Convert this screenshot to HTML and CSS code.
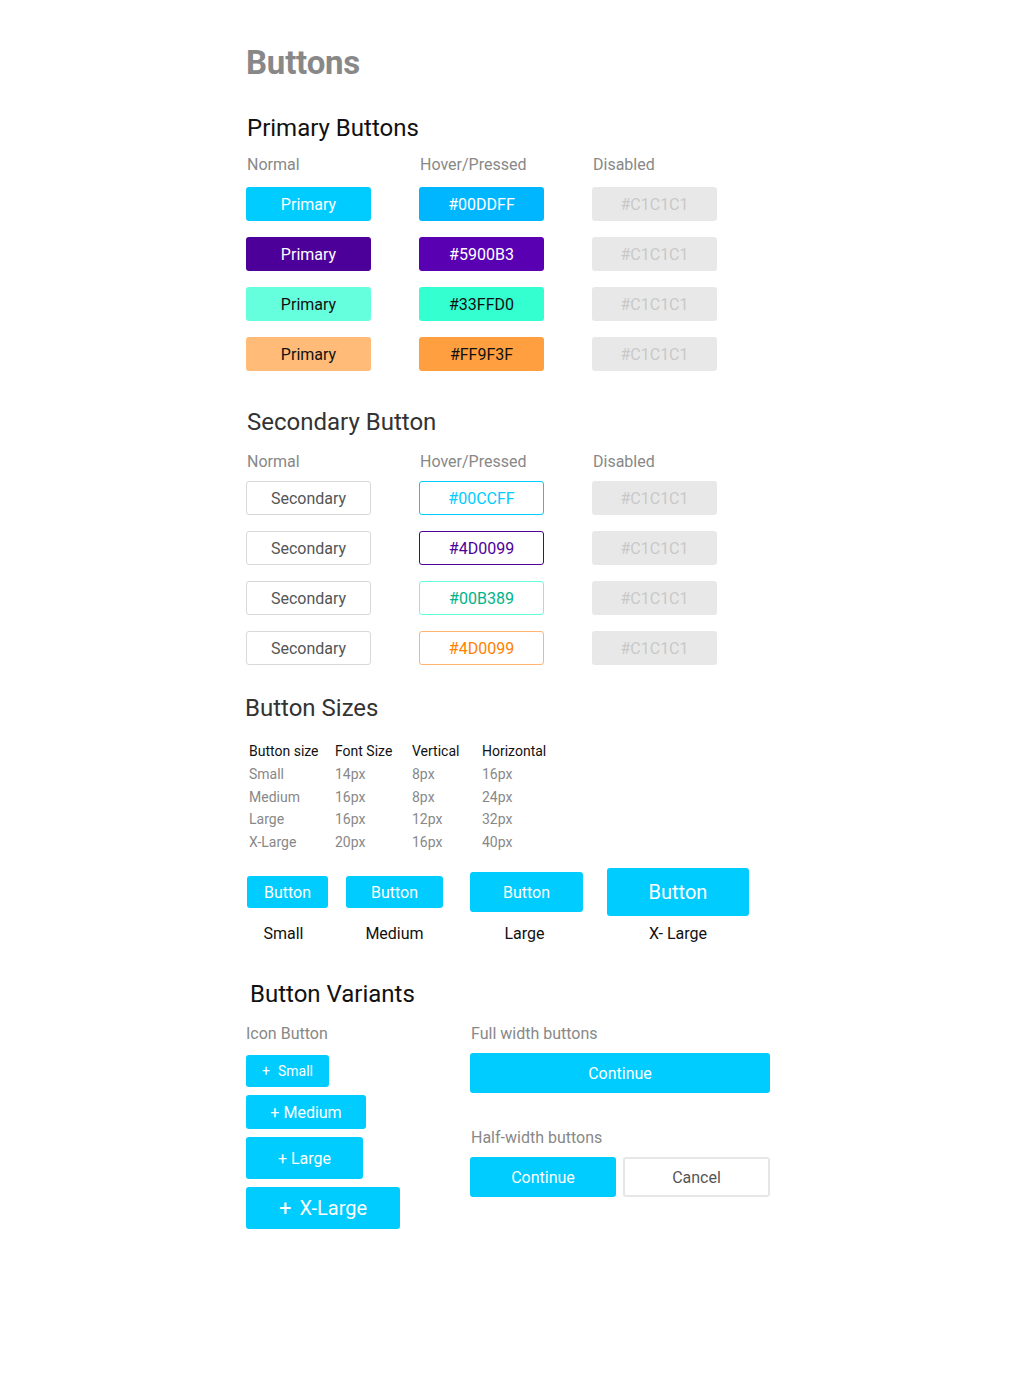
FILE: index.html
```html
<!DOCTYPE html>
<html lang="en">
<head>
<meta charset="utf-8">
<title>Buttons</title>
<link rel="stylesheet" href="styles.css">
</head>
<body>
<main class="page">
  <h1 class="title">Buttons</h1>

  <h2 class="h2 h2-primary">Primary Buttons</h2>
  <div class="state-grid state-grid-primary">
    <div class="col">
      <div class="col-label">Normal</div>
      <div class="btn p-cyan">Primary</div>
      <div class="btn p-purple">Primary</div>
      <div class="btn p-mint">Primary</div>
      <div class="btn p-orange">Primary</div>
    </div>
    <div class="col">
      <div class="col-label">Hover/Pressed</div>
      <div class="btn h-cyan">#00DDFF</div>
      <div class="btn h-purple">#5900B3</div>
      <div class="btn h-mint">#33FFD0</div>
      <div class="btn h-orange">#FF9F3F</div>
    </div>
    <div class="col">
      <div class="col-label">Disabled</div>
      <div class="btn disabled">#C1C1C1</div>
      <div class="btn disabled">#C1C1C1</div>
      <div class="btn disabled">#C1C1C1</div>
      <div class="btn disabled">#C1C1C1</div>
    </div>
  </div>

  <h2 class="h2 h2-secondary">Secondary Button</h2>
  <div class="state-grid state-grid-secondary">
    <div class="col">
      <div class="col-label">Normal</div>
      <div class="btn sec">Secondary</div>
      <div class="btn sec">Secondary</div>
      <div class="btn sec">Secondary</div>
      <div class="btn sec">Secondary</div>
    </div>
    <div class="col">
      <div class="col-label">Hover/Pressed</div>
      <div class="btn s-cyan">#00CCFF</div>
      <div class="btn s-purple">#4D0099</div>
      <div class="btn s-mint">#00B389</div>
      <div class="btn s-orange">#4D0099</div>
    </div>
    <div class="col">
      <div class="col-label">Disabled</div>
      <div class="btn disabled">#C1C1C1</div>
      <div class="btn disabled">#C1C1C1</div>
      <div class="btn disabled">#C1C1C1</div>
      <div class="btn disabled">#C1C1C1</div>
    </div>
  </div>

  <h2 class="h2 h2-sizes">Button Sizes</h2>
  <table class="size-table">
    <thead>
      <tr><th>Button size</th><th>Font Size</th><th>Vertical</th><th>Horizontal</th></tr>
    </thead>
    <tbody>
      <tr><td>Small</td><td>14px</td><td>8px</td><td>16px</td></tr>
      <tr><td>Medium</td><td>16px</td><td>8px</td><td>24px</td></tr>
      <tr><td>Large</td><td>16px</td><td>12px</td><td>32px</td></tr>
      <tr><td>X-Large</td><td>20px</td><td>16px</td><td>40px</td></tr>
    </tbody>
  </table>

  <div class="size-row">
    <div class="size-item item-s">
      <div class="size-slot"><div class="sbtn sz-s">Button</div></div>
      <div class="size-label">Small</div>
    </div>
    <div class="size-item item-m">
      <div class="size-slot"><div class="sbtn sz-m">Button</div></div>
      <div class="size-label">Medium</div>
    </div>
    <div class="size-item item-l">
      <div class="size-slot"><div class="sbtn sz-l">Button</div></div>
      <div class="size-label">Large</div>
    </div>
    <div class="size-item item-xl">
      <div class="size-slot"><div class="sbtn sz-xl">Button</div></div>
      <div class="size-label">X- Large</div>
    </div>
  </div>

  <h2 class="h2 h2-variants">Button Variants</h2>
  <div class="variants">
    <div class="var-left">
      <div class="var-label">Icon Button</div>
      <div class="icon-list">
        <div class="ibtn ib-s"><span class="plus plus-s">+</span>Small</div>
        <div class="ibtn ib-m"><span class="plus">+</span>Medium</div>
        <div class="ibtn ib-l"><span class="plus">+</span>Large</div>
        <div class="ibtn ib-xl"><span class="plus plus-xl">+</span>X-Large</div>
      </div>
    </div>
    <div class="var-right">
      <div class="var-label">Full width buttons</div>
      <div class="wbtn full">Continue</div>
      <div class="var-label half-label">Half-width buttons</div>
      <div class="half-row">
        <div class="wbtn half">Continue</div>
        <div class="wbtn half cancel">Cancel</div>
      </div>
    </div>
  </div>
</main>
</body>
</html>
```

FILE: styles.css
```css
* { box-sizing: border-box; }

html, body {
  margin: 0;
  padding: 0;
  background: #ffffff;
}

body {
  font-family: Roboto, "Liberation Sans", Arial, sans-serif;
  color: #111;
}

.page {
  padding: 42px 0 120px 246px;
}

.title {
  margin: 0;
  font-size: 33px;
  line-height: 42px;
  font-weight: 700;
  color: #888888;
  letter-spacing: -0.2px;
}

.h2 {
  margin: 0;
  font-size: 24px;
  line-height: 28px;
  font-weight: 400;
  color: #111;
}

.h2-primary { margin-top: 30px; padding-left: 1px; }
.h2-secondary { margin-top: 37px; color: #333; padding-left: 1px; }
.h2-sizes { margin-top: 29px; color: #333; margin-left: -1px; }
.h2-variants { margin-top: 36px; padding-left: 4px; }

.state-grid {
  display: flex;
  gap: 48px;
}
.state-grid-primary { margin-top: 13px; }
.state-grid-secondary { margin-top: 16px; }

.col {
  display: flex;
  flex-direction: column;
  gap: 16px;
  width: 125px;
}

.col-label {
  font-size: 16px;
  line-height: 20px;
  color: #888;
  padding-left: 1px;
  margin-bottom: -4px;
}
.state-grid-secondary .col-label { margin-bottom: -7px; }

.btn {
  height: 34px;
  border-radius: 3px;
  display: flex;
  align-items: center;
  justify-content: center;
  font-size: 16px;
  color: #fff;
  border: 1px solid transparent;
}

.p-cyan { background: #00CCFF; }
.p-purple { background: #4D0099; }
.p-mint { background: #66FFDD; color: #111; }
.p-orange { background: #FFBB77; color: #111; }

.h-cyan { background: #00B6FF; }
.h-purple { background: #5900B3; }
.h-mint { background: #33FFD0; color: #111; }
.h-orange { background: #FF9F3F; color: #111; }

.disabled { background: #E8E8E8; color: #C8C8C8; }

.sec { background: #fff; border-color: #D8D8D8; color: #555; }
.s-cyan { background: #fff; border-color: #00CCFF; color: #00CCFF; }
.s-purple { background: #fff; border-color: #4D0099; color: #4D0099; }
.s-mint { background: #fff; border-color: #66FFDD; color: #00B389; }
.s-orange { background: #fff; border-color: #FFB470; color: #FF8000; }

.size-table {
  margin-top: 17px;
  margin-left: 1px;
  border-collapse: collapse;
  font-size: 14px;
}
.size-table th,
.size-table td {
  padding: 0 2px;
  text-align: left;
  vertical-align: top;
}
.size-table th {
  font-weight: 400;
  color: #111;
  line-height: 24px;
  height: 24px;
}
.size-table td {
  color: #888;
  line-height: 22.6px;
  height: 22.6px;
}
.size-table th:nth-child(1) { width: 86px; }
.size-table th:nth-child(2) { width: 77px; }
.size-table th:nth-child(3) { width: 70px; }

.size-row {
  display: flex;
  margin-top: 15px;
  align-items: flex-start;
}

.size-item {
  display: flex;
  flex-direction: column;
  align-items: center;
}
.item-s { margin-left: 1px; }
.item-m { margin-left: 18px; }
.item-l { margin-left: 27px; }
.item-xl { margin-left: 24px; }

.size-slot {
  height: 48px;
  display: flex;
  align-items: center;
}

.sbtn {
  background: #00CCFF;
  color: #fff;
  border-radius: 3px;
  display: flex;
  align-items: center;
  justify-content: center;
  font-size: 16px;
}
.sz-s { height: 32px; width: 81px; }
.sz-m { height: 32px; width: 97px; }
.sz-l { height: 40px; width: 113px; }
.sz-xl { height: 48px; width: 142px; font-size: 20px; }

.size-label {
  margin-top: 8px;
  font-size: 16px;
  line-height: 20px;
  color: #111;
}
.item-s .size-label { margin-right: 8px; }
.item-l .size-label { margin-right: 4px; }

.variants {
  display: flex;
  margin-top: 16px;
}

.var-left { width: 224px; }
.var-right { width: 300px; }

.var-label {
  font-size: 16px;
  line-height: 20px;
  color: #888;
}
.var-right .var-label { padding-left: 1px; }

.icon-list {
  margin-top: 11px;
  display: flex;
  flex-direction: column;
  align-items: flex-start;
  gap: 8px;
}

.ibtn {
  background: #00CCFF;
  color: #fff;
  border-radius: 3px;
  display: flex;
  align-items: center;
  justify-content: center;
  font-size: 16px;
}
.plus { margin-right: 4px; }
.plus-s { margin-right: 8px; }
.plus-xl { margin-right: 8px; font-size: 22px; }
.ib-s { height: 32px; width: 83px; font-size: 14px; }
.ib-m { height: 34px; width: 120px; }
.ib-l { height: 42px; width: 117px; }
.ib-xl { height: 42px; width: 154px; font-size: 20px; }

.wbtn {
  height: 40px;
  border-radius: 3px;
  background: #00CCFF;
  color: #fff;
  display: flex;
  align-items: center;
  justify-content: center;
  font-size: 16px;
}
.full {
  margin-top: 9px;
  width: 300px;
}
.half-label { margin-top: 35px; }
.half-row {
  margin-top: 9px;
  display: flex;
  gap: 7px;
}
.half { width: 146px; }
.cancel {
  width: 147px;
  background: #fff;
  border: 2px solid #E6E6E6;
  color: #555;
}
```
